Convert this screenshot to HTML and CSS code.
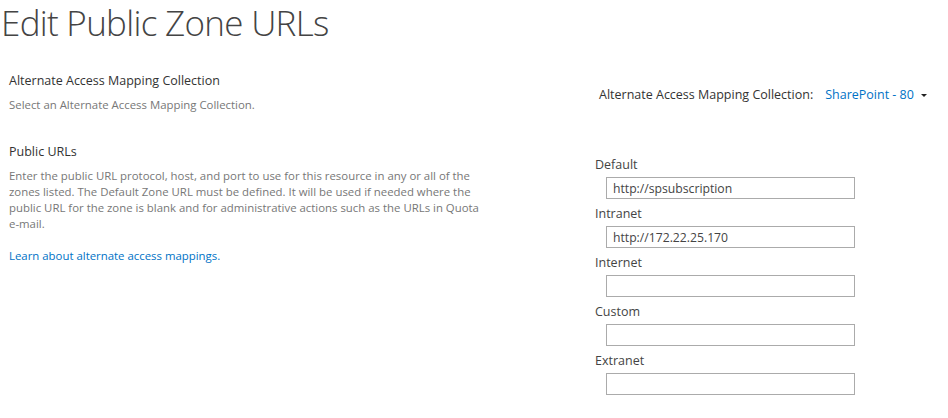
FILE: index.html
```html
<!DOCTYPE html>
<html lang="en">
<head>
  <meta charset="UTF-8">
  <meta name="viewport" content="width=device-width, initial-scale=1">
  <title>Edit Public Zone URLs</title>
  <link rel="stylesheet" href="styles.css">
</head>
<body>
  <h1 class="page-title">Edit Public Zone URLs</h1>

  <div class="section section-first">
    <div class="section-info">
      <h3 class="section-head">Alternate Access Mapping Collection</h3>
      <div class="section-desc">Select an Alternate Access Mapping Collection.</div>
    </div>
    <div class="section-body">
      <div class="aam-picker">
        <span>Alternate Access Mapping Collection:</span>
        <a class="aam-value" href="#">SharePoint - 80</a>
        <span class="caret"></span>
      </div>
    </div>
  </div>

  <div class="section">
    <div class="section-info">
      <h3 class="section-head">Public URLs</h3>
      <div class="section-desc">Enter the public URL protocol, host, and port to use for this resource in any or all of the zones listed. The Default Zone URL must be defined. It will be used if needed where the public URL for the zone is blank and for administrative actions such as the URLs in Quota e-mail.</div>
      <a class="learn" href="#">Learn about alternate access mappings.</a>
    </div>
    <div class="section-body zones">
      <label class="zone-label">Default</label>
      <input class="zone-input" type="text" value="http://spsubscription">
      <label class="zone-label">Intranet</label>
      <input class="zone-input" type="text" value="http://172.22.25.170">
      <label class="zone-label">Internet</label>
      <input class="zone-input" type="text">
      <label class="zone-label">Custom</label>
      <input class="zone-input" type="text">
      <label class="zone-label">Extranet</label>
      <input class="zone-input" type="text">
    </div>
  </div>
</body>
</html>
```

FILE: styles.css
```css
body {
  margin: 0;
  font-family: "Segoe UI", "Open Sans", sans-serif;
  color: #444;
  background: #fff;
}
.page-title {
  margin: 0;
  padding: 0 0 0 1px;
  font-size: 35px;
  font-weight: 300;
  letter-spacing: -0.7px;
  line-height: 46px;
  color: #444;
}
.section {
  display: grid;
  grid-template-columns: 587px 1fr;
}
.section-first {
  margin-top: 26px;
  height: 71px;
}
.section-info {
  padding-left: 9px;
  width: 480px;
}
.section-head {
  margin: 0;
  font-size: 12.5px;
  font-weight: 400;
  line-height: 18px;
  color: #333;
}
.section-desc {
  margin-top: 7px;
  font-size: 11.4px;
  line-height: 16px;
  color: #777;
}
.learn {
  display: block;
  margin-top: 16px;
  font-size: 11.4px;
  line-height: 16px;
  color: #0072c6;
  text-decoration: none;
}
.aam-picker {
  display: flex;
  align-items: center;
  margin: 14px 0 0 8px;
  font-size: 12.5px;
  line-height: 18px;
  color: #333;
}
.aam-value {
  margin-left: 12px;
  color: #0072c6;
  text-decoration: none;
}
.caret {
  margin-left: 7px;
  border-left: 3px solid transparent;
  border-right: 3px solid transparent;
  border-top: 3px solid #222;
}
.section-body {
  padding-left: 4px;
}
.zones {
  display: flex;
  flex-direction: column;
  padding-top: 13px;
  padding-left: 8px;
}
.zone-label {
  font-size: 12.5px;
  line-height: 18px;
  color: #444;
  margin-bottom: 3px;
}
.zone-input {
  box-sizing: border-box;
  width: 249px;
  height: 22px;
  margin: 0 0 6px 11px;
  padding: 0 6px;
  border: 1px solid #ababab;
  font-family: inherit;
  font-size: 12.2px;
  color: #444;
  outline: none;
}
```
